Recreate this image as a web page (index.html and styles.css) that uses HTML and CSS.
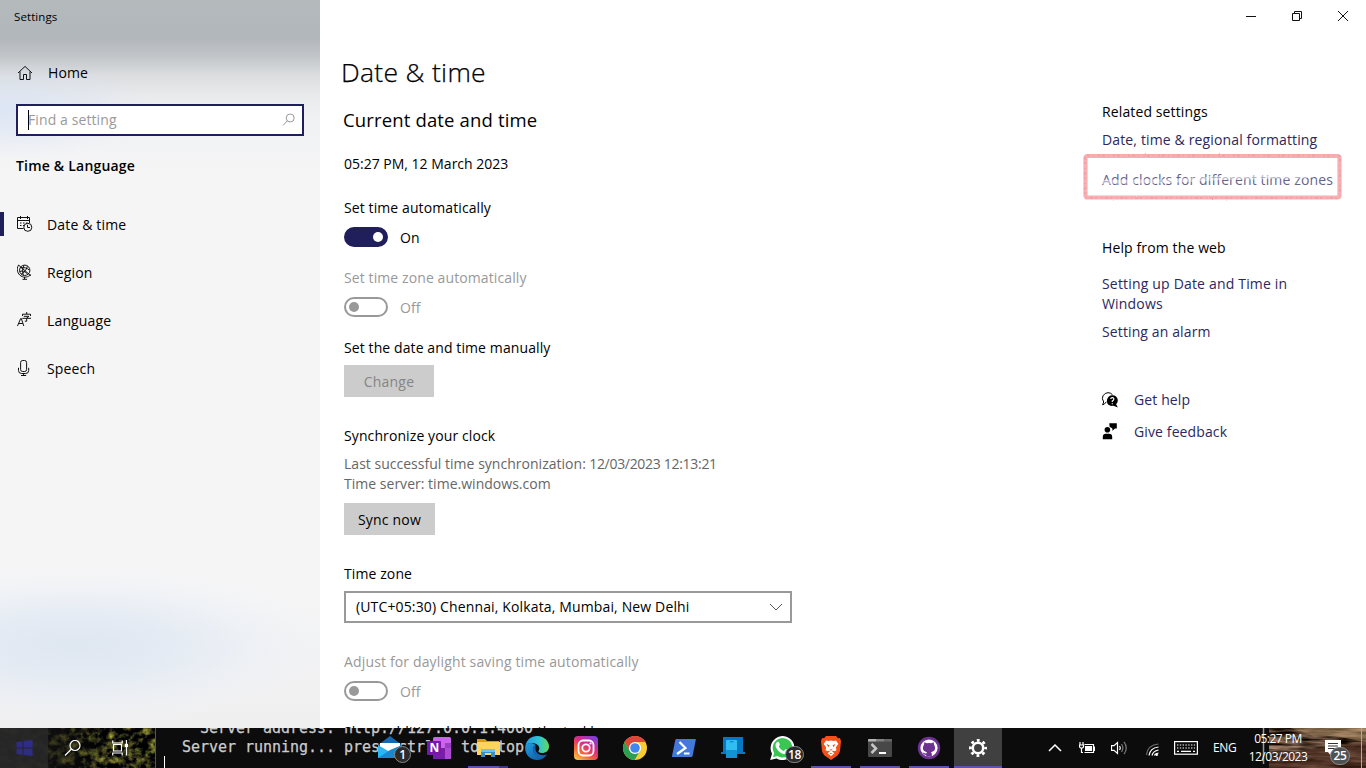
FILE: index.html
```html
<!DOCTYPE html>
<html lang="en">
<head>
<meta charset="utf-8">
<title>Settings</title>
<link rel="stylesheet" href="styles.css">
</head>
<body>
<div class="window">
  <aside class="sidebar">
    <div class="app-title">Settings</div>
    <a class="home"><svg class="i16" viewBox="0 0 16 16"><path d="M1 8 8 1.4 15 8M3 6.5V14.5H6.5V9.5H9.5V14.5H13V6.5"/></svg><span>Home</span></a>
    <div class="search"><span class="caret"></span><span class="placeholder">Find a setting</span><svg class="i16 lens" viewBox="0 0 16 16"><circle cx="9.2" cy="6" r="4"/><path d="M6.3 8.9 2 13.4"/></svg></div>
    <h2 class="group">Time &amp; Language</h2>
    <nav class="nav">
      <a class="nav-item active"><svg class="i16" viewBox="0 0 16 16"><path d="M6.5 12.5H.5V1.5H12.5V7M.5 4.5H12.5M3.5 0V3M10.5 0V3"/><path d="M3 7H11M3 9.5H7" stroke-dasharray="1.5 1.5"/><circle cx="10.8" cy="11.3" r="4"/><path d="M10.5 8.8V11.5H13"/></svg><span>Date &amp; time</span></a>
      <a class="nav-item"><svg class="i16 globe" viewBox="0 0 16 16"><circle cx="7.7" cy="6.3" r="5.2"/><path d="M1.6 1C-1 5 .6 10 4 12 7.3 14 11.3 13.3 13.8 10.5M1.5 1 13.8 11.8M3.6 4C7 3 10 4 12.4 6M2.8 7.5C6 6 9 8.5 10.8 10.4M7.2 1.3C5.2 4 5.2 8 6.4 11.2M10.3 2.2C9.8 5 8.2 8 4.3 10M7.5 13V15M5.5 15.3H10"/></svg><span>Region</span></a>
      <a class="nav-item"><svg class="i16" viewBox="0 0 16 16"><path d="M.5 14 3.7 6.5H4.3L6.8 14M1.5 11.5H5.8M9.7 0V2M5.5 4V2.2H13.5V4M6.8 4.3H12L9.7 6V9.2H7.8M5.3 6.3H14"/></svg><span>Language</span></a>
      <a class="nav-item"><svg class="i16" viewBox="0 0 16 16"><rect x="3.6" y=".5" width="6" height="11" rx="2"/><path d="M1.5 7.8V10.5Q1.5 13.5 4.5 13.5H8.7Q11.7 13.5 11.7 10.5V7.8M6.6 13.5V15.5M4 15.5H9.2"/></svg><span>Speech</span></a>
    </nav>
  </aside>

  <main class="content">
    <h1>Date &amp; time</h1>
    <h2 class="section">Current date and time</h2>
    <p class="now">05:27 PM, 12 March 2023</p>
    <p class="label auto">Set time automatically</p>
    <div class="toggle-row"><span class="toggle on"></span><span>On</span></div>
    <p class="label muted zone-auto">Set time zone automatically</p>
    <div class="toggle-row muted"><span class="toggle"></span><span>Off</span></div>
    <p class="label manual">Set the date and time manually</p>
    <button class="btn disabled">Change</button>
    <p class="label sync">Synchronize your clock</p>
    <p class="info"><span class="last">Last successful time synchronization:</span> 12/03/2023 12:13:21<br><span class="last">Time server: time.windows.com</span></p>
    <button class="btn now-btn">Sync now</button>
    <p class="label tz">Time zone</p>
    <div class="select"><span>(UTC+05:30) Chennai, Kolkata, Mumbai, New Delhi</span><svg viewBox="0 0 14 8"><path d="M1 1 7 7 13 1"/></svg></div>
    <p class="label muted dst">Adjust for daylight saving time automatically</p>
    <div class="toggle-row muted"><span class="toggle"></span><span>Off</span></div>
    <p class="label calendars">Show additional calendars in the taskbar</p>
  </main>

  <div class="side">
    <div class="caption">
      <svg viewBox="0 0 12 12"><path d="M1 6.5H11"/></svg>
      <svg viewBox="0 0 12 12"><path d="M1.5 3.5H8.5V10.5H1.5ZM3.5 3.5V1.5H10.5V8.5H8.5"/></svg>
      <svg viewBox="0 0 12 12"><path d="M1 1 11 11M11 1 1 11"/></svg>
    </div>
    <section class="related">
      <h3 class="rel">Related settings</h3>
      <a class="link fmt">Date, time &amp; regional formatting</a>
      <a class="link clocks">Add clocks for different time zones
        <svg class="marker" viewBox="0 0 260 48"><defs><filter id="rough" x="-2%" y="-8%" width="104%" height="116%"><feTurbulence type="fractalNoise" baseFrequency=".3" numOctaves="2" seed="4"/><feDisplacementMap in="SourceGraphic" scale="1.6"/></filter></defs><path class="fade" d="M20 30 90 29 140 26 230 24"/><g filter="url(#rough)"><rect x="3.5" y="4" width="254" height="41.5" rx="2"/><rect class="grain" x="3" y="3.5" width="255" height="42.5" rx="2"/></g></svg></a>
      <h3 class="help">Help from the web</h3>
      <a class="link setup">Setting up Date and Time in<br>Windows</a>
      <a class="link alarm">Setting an alarm</a>
      <a class="link action first"><svg viewBox="0 0 16 16"><path class="line" d="M4.5 9.7Q2 13 .6 12.8L1.7 10Q-.6 6.5 1 3.8 3 .6 6 .7 9 .7 10.5 2.8"/><path d="M10.4 3.2C16 3.4 17.3 9.4 14.1 12.2L15.9 15.6 11.5 13.8C6.5 14.5 4.5 11.8 5 8.1 5.4 5 8 3.1 10.4 3.2Z"/><path class="q" d="M8.7 7Q8.9 5.6 10.4 5.7 12 5.8 11.8 7.2 11.7 8.1 10.3 9V10M10.3 11.2V12.2"/></svg><span>Get help</span></a>
      <a class="link action"><svg viewBox="0 0 16 16"><path d="M7.3-.8H14.8V4.4H13L10.4 6.8V4.4L7.6 2.8ZM.8 15.3V13Q.8 9.7 4 9.7H7Q10.2 9.7 10.2 13V15.3Z"/><circle cx="5.4" cy="5.8" r="2.8"/></svg><span>Give feedback</span></a>
    </section>
  </div>
</div>

<footer class="taskbar">
  <svg class="wallpaper" viewBox="0 0 1366 40" preserveAspectRatio="none">
    <defs>
      <filter id="leaf" x="0" y="0" width="100%" height="100%" color-interpolation-filters="sRGB"><feTurbulence type="fractalNoise" baseFrequency=".12 .14" numOctaves="4" seed="8"/><feColorMatrix values="1.4 0 0 0 -.56  1.4 .1 0 0 -.61  .4 0 0 0 -.13  0 0 0 0 1"/></filter>
      <filter id="rock" x="0" y="0" width="100%" height="100%" color-interpolation-filters="sRGB"><feTurbulence type="fractalNoise" baseFrequency=".03 .22" numOctaves="3" seed="3"/><feColorMatrix values="1.2 0 0 0 -.24  1 0 0 0 -.23  .9 0 0 0 -.24  0 0 0 0 1"/></filter>
      <linearGradient id="shade"><stop offset="0" stop-color="#1f1f20" stop-opacity=".85"/><stop offset=".42" stop-color="#151412" stop-opacity=".6"/><stop offset=".7" stop-color="#111" stop-opacity="0"/></linearGradient>
    </defs>
    <rect width="1366" height="40" fill="#0c0c0c"/>
    <rect width="155" height="40" filter="url(#leaf)"/>
    <rect width="155" height="40" fill="url(#shade)"/>
    <rect width="48" height="40" fill="#29292b" opacity=".8"/>
    <path d="M155.5 0V40" stroke="#555"/>
    <rect x="1269" width="97" height="40" filter="url(#rock)"/>
    <path d="M1290 0H1366V14L1335 8 1315 9 1300 3Z" fill="#a58a60" opacity=".5"/>
    <path d="M1269 28 1320 20 1366 14V40H1269Z" fill="#4b2a1e" opacity=".6"/>
    <path d="M1263.5 0V36" stroke="#999" stroke-width="1.5"/>
  </svg>
  <pre class="console">  Server address: http://127.0.0.1:4000
Server running... press ctrl-c to stop.</pre>
  <span class="cursor"></span>

  <div class="system">
    <span><svg viewBox="0 0 16 16"><path fill="#2f2c86" d="M0 2 6 1.2V7.5H0ZM7 1 16 0V7.5H7ZM0 8.5H6V14.8L0 14ZM7 8.5H16V16L7 15Z"/></svg></span>
    <span><svg class="stroke" viewBox="0 0 16 16"><circle cx="10.5" cy="5.5" r="5"/><path d="M7 9 .5 15.5"/></svg></span>
    <span><svg class="stroke" viewBox="0 0 17 16"><path d="M.7.5V3H10.2V.5M1.5 4.5H9.5V11H1.5ZM.7 15.5V13H10.2V15.5M14.5 0V15.5"/><path d="M12.8 3.8H16V7H12.8Z" fill="#fff" stroke="none"/></svg></span>
  </div>

  <div class="apps">
    <span><svg viewBox="0 0 24 24"><path fill="#1269b4" d="M0 9 12 0 24 9V22H0Z"/><path fill="#fff" d="M2 7H22V15H2Z"/><path fill="#2eb5ef" d="M0 9 12 16 24 9V22H0Z"/><path fill="#1688d4" d="M0 22 12 14 24 9V22Z"/></svg><b class="badge">1</b></span>
    <span><svg viewBox="0 0 24 24"><rect x="6" y="1" width="18" height="22" rx="1.5" fill="#ca64ea"/><path fill="#9c3fc7" d="M18 7H24V17H18Z"/><path fill="#7b1fa2" d="M6 12H18V23H6Z"/><path fill="#ae4bd5" d="M18 12H24V23H18Z"/><rect y="5" width="14" height="14" rx="1" fill="#7419aa"/><text class="note" x="2.6" y="16.3">N</text></svg></span>
    <span class="open split"><svg viewBox="0 0 24 24"><path fill="#d99a1c" d="M1 3H9L11 5H23V12H1Z"/><path fill="#ffd35c" d="M1 6H24V19H1Z"/><path fill="#358fc9" d="M5 13H19V21H15V17H9V21H5Z"/><path fill="#72bff0" d="M5 13H19V16H5Z"/></svg></span>
    <span><svg viewBox="0 0 24 24"><defs><linearGradient id="edgeTop"><stop stop-color="#259ce4"/><stop offset=".55" stop-color="#2dc3d7"/><stop offset="1" stop-color="#64d859"/></linearGradient><linearGradient id="edgeLow" x2="1" y2="1"><stop stop-color="#1f9de0"/><stop offset="1" stop-color="#105299"/></linearGradient></defs><path fill="url(#edgeTop)" d="M.4 10C1.5 3.4 6.4 0 12 0 20 0 24 6 24 10.5 24 15 20.5 17 17 17 14 17 13 15.8 13.5 15 15 13 14.8 9 10 7.4 6.5 6.3 2.5 7.2.4 10Z"/><path fill="url(#edgeLow)" d="M.3 10C3 6 8 6.5 10.5 9 7 11.5 7.5 17.6 12.2 20 15.8 21.8 19 20.6 21.8 18.4 19.6 22 16 24 12 24 4.6 24-.8 17.5.3 10Z"/><path fill="#1566b0" d="M10.5 9C6 12 7.4 21 16 22 18.3 21.4 20.5 20 21.8 18.4 17 20.7 10.6 17.8 10.5 13.3Z"/></svg></span>
    <span><svg viewBox="0 0 24 24"><defs><linearGradient id="insta" x1=".1" y1="1" x2=".8" y2="0"><stop stop-color="#ffc84a"/><stop offset=".3" stop-color="#f66a36"/><stop offset=".6" stop-color="#df2d7d"/><stop offset="1" stop-color="#7d3ddb"/></linearGradient></defs><rect width="24" height="24" rx="4" fill="url(#insta)"/><g fill="none" stroke="#fff" stroke-width="1.8"><rect x="4.5" y="4.5" width="15" height="15" rx="4.5"/><circle cx="12" cy="12" r="3.7"/></g><circle cx="16.5" cy="7.5" r="1.1" fill="#fff"/></svg></span>
    <span><svg viewBox="0 0 24 24"><circle cx="12" cy="12" r="12" fill="#f9cb32"/><path fill="#df4638" d="M1.6 6A12 12 0 0 1 22.4 6H12L7 15Z"/><path fill="#2ca052" d="M1.6 6A12 12 0 0 0 11.5 24L17 15 12 17.5 7 15Z"/><circle cx="12" cy="12" r="6.1" fill="#fff"/><circle cx="12" cy="12" r="4.8" fill="#4386ed"/></svg></span>
    <span><svg viewBox="0 0 24 24"><path fill="#4378dd" d="M4.3 3H23.2Q24 3 23.8 4L20.5 20Q20.2 21 19.4 21H.6Q-.2 21 0 20L3.3 4Q3.5 3 4.3 3Z"/><path fill="none" stroke="#fff" stroke-width="2.2" d="M7.5 6 13.5 12 5 18M12 17.5H17.5"/></svg></span>
    <span><svg viewBox="0 0 24 24"><path fill="#0878c4" d="M2 1H22V16H24V18H0V16H2Z"/><rect x="5" y="4" width="11" height="18" rx="1" fill="#32bdf1"/><path fill="#1591d5" d="M5 14H16V21Q16 22 15 22H6Q5 22 5 21Z"/><path stroke="#0878b4" d="M9 5.8H12.5"/></svg></span>
    <span><svg viewBox="0 0 24 24"><path fill="#fff" d="M.2 24 2 17.8A12 12 0 1 1 6.4 22.4Z"/><path fill="#3ac653" d="M3 21.2 4.2 17A9.8 9.8 0 1 1 7.3 20.1Z"/><path fill="#fff" d="M7.5 5.8C8.8 5.2 9.1 6.6 9.8 8.4 10 9 8.7 10 8.8 10.4 9.8 12.6 11.4 14 13.8 15L15.3 13.4Q15.8 13 18.5 14.6C18.6 18 15.5 18.6 13 17.8 9 16.4 6.2 12.8 5.6 10 5.4 8.3 6 6.5 7.5 5.8Z"/></svg><b class="badge wide">18</b></span>
    <span class="open"><svg viewBox="0 0 24 24"><path fill="#f45119" d="M7 0H17L19 2.2 21 2 22 5.3 21 15Q20.3 17.5 18.5 19.5L12 24 5.5 19.5Q3.7 17.5 3 15L2 5.3 3 2 5 2.2Z"/><path fill="#fff" d="M7 4.4 9.5 5 12 4.5 14.5 5 17 4.4 19.3 8 16.8 11.5 17.5 14.2 15.3 15.2 13.8 14.5 13 15.3 15.4 17.2 12 20 8.6 17.2 11 15.3 10.2 14.5 8.7 15.2 6.5 14.2 7.2 11.5 4.7 8Z"/><path fill="#f45119" d="M7.5 8 10.5 9.2 9.3 11.2ZM16.5 8 13.5 9.2 14.7 11.2ZM10.5 12.6 12 13.8 13.5 12.6 12.6 14.4H11.4ZM10 16.9H14L12 18.1Z"/></svg></span>
    <span class="open"><svg viewBox="0 0 24 24"><rect y="3" width="24" height="18" rx="1" fill="#484848"/><path fill="#b5b5b5" d="M1 3H8V5.5H0V4Q0 3 1 3Z"/><path fill="#828282" d="M8 3H16V5.5H8Z"/><path fill="#666" d="M16 3H23Q24 3 24 4V5.5H16Z"/><path fill="none" stroke="#c7c7c7" stroke-width="2.5" d="M3.5 8 8 12.5 3.5 17"/><path stroke="#fff" stroke-width="2" d="M11 17H18"/></svg></span>
    <span class="open"><svg viewBox="0 0 24 24"><circle cx="12" cy="12" r="11.2" fill="#6d3192"/><circle cx="12" cy="12" r="8.6" fill="#fff"/><path fill="#6d3192" d="M7.3 6.2 9.8 7.3Q12 6.8 14.2 7.3L16.7 6.2 17 8.8C19.6 12.6 17.3 15.8 14 16.2Q14.9 17 14.8 18.2V20.5H9.2V18.8C6.8 19.3 6.4 17.6 5.4 16.6 7.3 16.5 7.3 18 9.2 17.4L10 16.2C6.7 15.8 4.4 12.6 7 8.8Z"/></svg></span>
    <span class="open current"><svg viewBox="0 0 24 24"><circle cx="12" cy="12" r="5.2" fill="none" stroke="#fff" stroke-width="2.5"/><circle cx="12" cy="12" r="7.6" fill="none" stroke="#fff" stroke-width="2.8" stroke-dasharray="2.8 3.169" stroke-dashoffset="1.4"/></svg></span>
  </div>

  <div class="tray">
    <svg class="stroke t-chev" viewBox="0 0 14 8"><path d="M1 7 7 1 13 7" stroke-width="1.5"/></svg>
    <svg class="stroke t-bat" viewBox="0 0 16 12"><path d="M5.5 2.5H14.5V10.5H5.5M14.5 5H15.5V8.5H14.5M1 0V3M4 0V3M.5 3H4.5V5L3.5 6H1.5L.5 5ZM2.5 6V10.5H4"/><path d="M6 4H13V9H6Z" fill="#fff" stroke="none"/></svg>
    <svg class="stroke t-vol" viewBox="0 0 16 14"><path d="M.5 4.7H3L6.5 1.5V12.5L3 9.3H.5ZM8.5 5Q10 7 8.5 9"/><path d="M10.5 3Q13.3 7 10.5 11M13 .8Q17.5 7 13 13.2" opacity=".45"/></svg>
    <svg class="stroke t-wifi" viewBox="0 0 13 13"><path d="M.5 12Q1.5 2 12.5 1" opacity=".4"/><path d="M3 12.5Q4 5 12.5 4M6 12.5Q7 8 12.5 7M8.5 12.5Q9 10.5 12.5 10"/><circle cx="10.8" cy="11.8" r="1.2" fill="#fff" stroke="none"/></svg>
    <svg class="stroke t-key" viewBox="0 0 24 14"><rect x=".6" y=".6" width="22.8" height="12.6"/><path d="M3 4H21M3 7H21" stroke-dasharray="1.4 1.4"/><path d="M3 10.3H5M7 10.3H17M19 10.3H21"/></svg>
    <span class="lang">ENG</span>
    <span class="clock">05:27 PM<br>12/03/2023</span>
    <span class="notice"><svg viewBox="0 0 16 16"><path fill="#fff" d="M0 0H16V12H6V16L3 12H0Z"/><path stroke="#333" d="M3 3.5H13M3 6H13M3 8.5H10"/></svg><b class="badge">25</b></span>
  </div>
</footer>
</body>
</html>
```

FILE: styles.css
```css
* { box-sizing: border-box; }
body { margin: 0; width: 1366px; height: 768px; overflow: hidden; background: #fff; color: #000; font: 14px/20px "Open Sans", "Noto Sans", sans-serif; letter-spacing: .1px; }
p, h1, h2, h3 { margin: 0; font: inherit; }
svg { display: block; flex: none; }
.window { display: flex; height: 728px; overflow: hidden; }

.sidebar { width: 320px; flex: none; background:
  radial-gradient(ellipse 265px 80px at 75px 645px, rgba(220,229,240,.9), rgba(223,232,243,.75) 35%, rgba(230,237,246,.45) 65%, rgba(240,243,248,.15) 88%, transparent),
  radial-gradient(ellipse 150px 50px at 0 110px, rgba(214,226,245,.75), transparent),
  linear-gradient(#b4b9bc, #b2b7bb 38px, #c1c5c8 56px, #dcdee0 76px, #e9eaec 96px, #f0f1f3 118px, #f5f5f6 170px, #f5f5f6 600px, #efeff0 728px); }
.app-title { padding: 7px 0 0 14px; font-size: 11.5px; height: 53px; }
.home { display: flex; align-items: center; height: 40px; padding-left: 17px; gap: 15px; }
.i16 { width: 16px; height: 16px; fill: none; stroke: #111; stroke-width: 1; }
.search { display: flex; align-items: center; margin: 11px 16px 0; height: 32px; border: 2px solid #211e5c; background: #fff; padding: 0 5px 0 10px; color: #9a9a9a; }
.caret { width: 1px; height: 20px; background: #000; }
.placeholder { flex: 1; margin-left: -1px; }
.lens { stroke: #999; }
.group { margin: 20px 0 0 16px; font-weight: 600; letter-spacing: .2px; }
.nav { padding-top: 24px; }
.nav-item { display: flex; align-items: center; height: 48px; padding-left: 17px; gap: 14px; letter-spacing: .15px; }
.nav-item span { padding-top: 2px; }
.active { background: linear-gradient(#211e5c, #211e5c) left center / 4px 24px no-repeat; }

.content { width: 782px; padding: 52px 0 0 24px; flex: none; white-space: nowrap; }
h1 { font-size: 26.5px; line-height: 40px; font-weight: 300; margin-left: -3px; letter-spacing: .3px; -webkit-text-stroke: .25px #000; }
.section { font-size: 18.5px; line-height: 28px; margin: 14px 0 0 -1px; letter-spacing: .15px; }
.now { margin-top: 20px; letter-spacing: 0; }
.auto { margin-top: 24px; }
.toggle-row { display: flex; gap: 12px; height: 20px; margin-top: 9px; }
.toggle-row span:last-child { line-height: 21px; }
.toggle { width: 44px; height: 20px; border: 2px solid #999; border-radius: 10px; padding: 3px; }
.toggle::after { content: ""; display: block; width: 10px; height: 10px; border-radius: 50%; background: #999; }
.on { background: #211e5c; border-color: #211e5c; }
.on::after { background: #fff; margin-left: auto; }
.muted { color: #999; }
.zone-auto, .manual { margin-top: 21px; }
.btn { display: block; height: 32px; width: 90px; border: 0; padding: 1px 0 0; background: #ccc; color: #000; font: inherit; letter-spacing: .2px; margin-top: 7px; }
.disabled { color: #858585; }
.sync { margin-top: 29px; }
.info { margin-top: 8px; color: #666; letter-spacing: -.3px; }
.last { letter-spacing: .02px; }
.now-btn { width: 91px; margin-top: 9px; }
.tz { margin-top: 29px; }
.select { display: flex; align-items: center; justify-content: space-between; width: 448px; height: 32px; margin-top: 7px; border: 2px solid #999; padding: 0 7px 0 10px; letter-spacing: .14px; }
.select svg { width: 14px; height: 8px; fill: none; stroke: #555; }
.dst { margin-top: 29px; letter-spacing: .15px; }
.calendars { margin-top: 21px; }

.side { flex: 1; }
.caption { display: flex; gap: 34px; padding: 10px 0 0 143px; height: 102px; }
.caption svg { width: 12px; height: 12px; fill: none; stroke: #111; }
.related { display: flex; flex-direction: column; white-space: nowrap; letter-spacing: .12px; }
.link { color: #2b2860; }
.fmt { margin-top: 8px; letter-spacing: .14px; }
.clocks { position: relative; margin-top: 20px; color: #66638d; letter-spacing: .13px; }
.marker { position: absolute; left: -20px; top: -18px; width: 260px; height: 48px; fill: none; stroke: #f7afb2; stroke-width: 4.2; overflow: visible; }
.grain { stroke: #ea969c; stroke-width: 2; stroke-dasharray: 3 3 1 4 2 2; opacity: .5; }
.fade { stroke: #fff; stroke-width: 4; opacity: .5; }
.help { margin-top: 48px; }
.setup { margin-top: 16px; letter-spacing: .18px; }
.alarm { margin-top: 8px; }
.action { display: flex; align-items: center; gap: 16px; margin-top: 12px; }
.first { margin-top: 48px; }
.action svg { width: 16px; height: 16px; fill: #000; overflow: visible; }
.action .line { fill: none; stroke: #000; }
.action .q { fill: none; stroke: #fff; stroke-width: 1.2; }

.taskbar { position: relative; height: 40px; display: flex; align-items: center; overflow: hidden; color: #fff; }
.wallpaper { position: absolute; inset: 0; width: 1366px; height: 40px; }
.console { position: absolute; left: 182px; top: -9px; margin: 0; font: 15px/19px "DejaVu Sans Mono", monospace; letter-spacing: -.03px; color: #ccc; -webkit-text-stroke: .25px #ccc; }
.cursor { position: absolute; left: 164px; top: 28px; width: 1px; height: 12px; background: #fff; }
.system, .apps, .tray { position: relative; display: flex; align-items: center; flex: none; height: 40px; }
.system { width: 366px; }
.system span { width: 48px; display: grid; place-items: center; }
.system svg { width: 17px; height: 16px; }
.stroke { fill: none; stroke: #fff; stroke-width: 1.2; }
.apps { gap: 1px; }
.apps > span { position: relative; width: 48px; height: 40px; display: grid; place-items: center; }
.apps svg { width: 24px; height: 24px; }
.note { font: 700 12px "Open Sans", sans-serif; fill: #fff; letter-spacing: 0; }
.open::after { content: ""; position: absolute; bottom: 0; left: 4px; width: 40px; height: 2px; background: #5e52ad; }
.split::after { background: linear-gradient(90deg, #5e52ad 31px, #40397c 31px); }
.current { background: #404040; }
.current::after { left: 0; width: 48px; }
.badge { position: absolute; left: 28px; top: 18px; width: 17px; height: 17px; border: 1px solid #888; border-radius: 9px; background: #292b2d; font: 600 12px/15px "Open Sans", sans-serif; letter-spacing: -.3px; text-align: center; }
.badge.wide { left: 27px; width: 19px; }
.tray { flex: 1; }
.t-chev { width: 14px; height: 8px; margin-left: 46px; }
.t-bat { width: 16px; height: 12px; margin-left: 17px; }
.t-vol { width: 16px; height: 14px; margin-left: 16px; }
.t-wifi { width: 13px; height: 13px; margin: 3px 0 0 19px; }
.t-key { width: 24px; height: 14px; margin-left: 15px; }
.lang { width: 24px; margin-left: 15px; font-size: 12px; letter-spacing: -.35px; }
.clock { width: 70px; margin-left: 6px; font-size: 12px; line-height: 18px; text-align: center; letter-spacing: -.5px; }
.notice { position: relative; margin-left: 12px; }
.notice svg { width: 16px; height: 16px; }
.notice .badge { left: 5px; top: 7px; width: 20px; height: 18px; line-height: 16px; background: #4e5253; }
.tray::after { content: ""; position: absolute; right: 4px; top: 0; width: 1px; height: 40px; background: #aaa; }
```
